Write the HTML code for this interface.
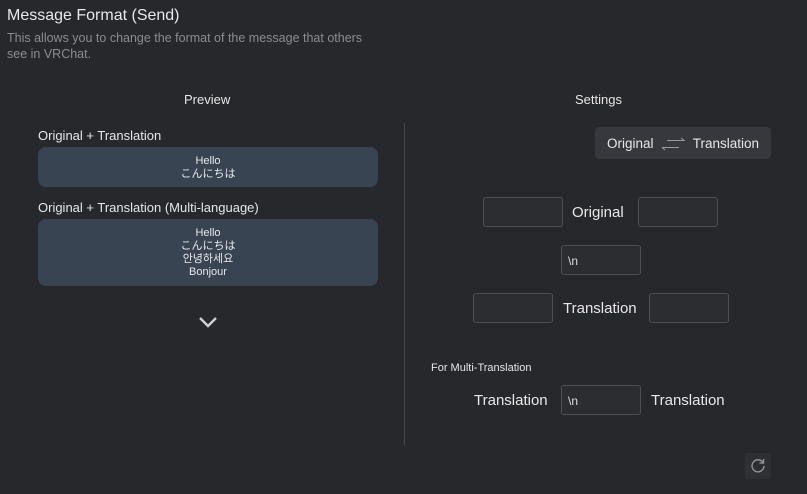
<!DOCTYPE html>
<html><head><meta charset="utf-8"><style>
*{margin:0;padding:0;box-sizing:border-box}
body{width:807px;height:494px;background:#27282c;font-family:"Liberation Sans","Noto Sans CJK JP",sans-serif;color:#e6e6e8;position:relative;overflow:hidden}
.a{position:absolute;white-space:nowrap}
.box{position:absolute;background:#394452;border-radius:8px;left:38px;width:340px;text-align:center;font-size:11px;line-height:13px;color:#e8e8ea}
.in{position:absolute;width:80px;height:30px;border:1px solid #4e4f54;border-radius:3px;background:#2c2d31;font-size:12px;padding:8px 6px;color:#ddd}
.lb{font-size:15px;color:#e8e8ea}
</style></head><body>
<div class="a" style="left:7px;top:7px;font-size:16px;color:#e8e8ea">Message Format (Send)</div>
<div class="a" style="left:7px;top:30px;font-size:12.5px;color:#8b8c90;line-height:16px">This allows you to change the format of the message that others<br>see in VRChat.</div>
<div class="a" style="left:184px;top:92px;font-size:13px">Preview</div>
<div class="a" style="left:575px;top:92px;font-size:13px">Settings</div>
<div class="a" style="left:404px;top:123px;width:1px;height:323px;background:#45464b"></div>
<div class="a" style="left:38px;top:128px;font-size:13px">Original + Translation</div>
<div class="box" style="top:147px;height:40px;padding-top:8px">Hello<br>こんにちは</div>
<div class="a" style="left:38px;top:200px;font-size:13px">Original + Translation (Multi-language)</div>
<div class="box" style="top:219px;height:67px;padding-top:8px">Hello<br>こんにちは<br>안녕하세요<br>Bonjour</div>
<svg class="a" style="left:198px;top:315px" width="20" height="14" viewBox="0 0 20 14"><path d="M2 3l8 8 8-8" fill="none" stroke="#d0d0d3" stroke-width="2.4"/></svg>
<div class="a" style="left:595px;top:127px;width:176px;height:32px;background:#37383d;border-radius:4px;font-size:13.5px;padding-top:9px;padding-left:12px">Original <svg style="vertical-align:middle;margin:0 3px" width="26" height="16" viewBox="0 0 26 16"><path d="M7 4.5h17l-3-2.5M2 11.5h17M2 11.5l3 2.5" fill="none" stroke="#9a9a9e" stroke-width="1"/></svg> Translation</div>
<div class="in" style="left:483px;top:197px"></div>
<div class="a lb" style="left:572px;top:204px">Original</div>
<div class="in" style="left:638px;top:197px"></div>
<div class="in" style="left:561px;top:245px">\n</div>
<div class="in" style="left:473px;top:293px"></div>
<div class="a lb" style="left:563px;top:300px">Translation</div>
<div class="in" style="left:649px;top:293px"></div>
<div class="a" style="left:431px;top:362px;font-size:11px">For Multi-Translation</div>
<div class="a lb" style="left:474px;top:392px">Translation</div>
<div class="in" style="left:561px;top:385px">\n</div>
<div class="a lb" style="left:651px;top:392px">Translation</div>
<div class="a" style="left:745px;top:453px;width:26px;height:26px;background:#2f3034;border-radius:3px"><svg width="26" height="26" viewBox="0 0 26 26"><path d="M18 9.5A6 6 0 1 0 19 13" fill="none" stroke="#9a9a9e" stroke-width="1.3"/><path d="M18.5 6v4h-4" fill="none" stroke="#9a9a9e" stroke-width="1.3"/></svg></div>
</body></html>
